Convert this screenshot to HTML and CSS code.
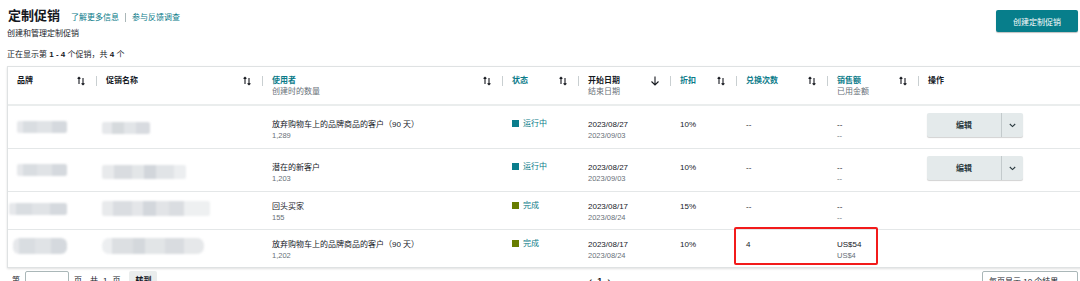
FILE: index.html
```html
<!DOCTYPE html>
<html lang="zh-CN">
<head>
  <meta charset="UTF-8">
  <meta name="viewport" content="width=device-width, initial-scale=1.0">
  <title>定制促销</title>
  <link rel="stylesheet" href="styles.css">
</head>
<body>
  <div class="page">
    <div class="top">
      <div>
        <div class="title-row">
          <h1>定制促销</h1>
          <a class="link">了解更多信息</a>
          <span class="sep"></span>
          <a class="link">参与反馈调查</a>
        </div>
        <p class="subtitle">创建和管理定制促销</p>
      </div>
      <button class="primary-btn">创建定制促销</button>
    </div>

    <p class="count">正在显示第 <b>1 - 4</b> 个促销，共 <b>4</b> 个</p>

    <div class="table-box">
      <table>
        <colgroup>
          <col style="width: 89px">
          <col style="width: 166px">
          <col style="width: 240px">
          <col style="width: 76px">
          <col style="width: 92px">
          <col style="width: 66px">
          <col style="width: 91px">
          <col style="width: 91px">
          <col>
        </colgroup>
        <thead>
          <tr>
            <th><div class="th-inner"><span class="label dark">品牌</span><svg class="sort" width="8" height="10" viewBox="0 0 8 10"><path d="M2 8V1M0.6 2.6L2 1.2l1.4 1.4M6 2v7M4.6 7.4L6 8.8l1.4-1.4" /></svg><span class="divider"></span></div></th>
            <th><div class="th-inner"><span class="label dark">促销名称</span><svg class="sort" width="8" height="10" viewBox="0 0 8 10"><path d="M2 8V1M0.6 2.6L2 1.2l1.4 1.4M6 2v7M4.6 7.4L6 8.8l1.4-1.4" /></svg><span class="divider"></span></div></th>
            <th><div class="th-inner"><span class="label"><span class="teal">使用者</span><span class="sub">创建时的数量</span></span><svg class="sort" width="8" height="10" viewBox="0 0 8 10"><path d="M2 8V1M0.6 2.6L2 1.2l1.4 1.4M6 2v7M4.6 7.4L6 8.8l1.4-1.4" /></svg><span class="divider"></span></div></th>
            <th><div class="th-inner"><span class="label teal">状态</span><svg class="sort" width="8" height="10" viewBox="0 0 8 10"><path d="M2 8V1M0.6 2.6L2 1.2l1.4 1.4M6 2v7M4.6 7.4L6 8.8l1.4-1.4" /></svg><span class="divider"></span></div></th>
            <th><div class="th-inner"><span class="label"><span class="dark">开始日期</span><span class="sub">结束日期</span></span><svg class="sort down" width="10" height="10" viewBox="0 0 10 10"><path d="M5 0.5v8.5M1.5 5.5L5 9l3.5-3.5" /></svg><span class="divider"></span></div></th>
            <th><div class="th-inner"><span class="label teal">折扣</span><svg class="sort" width="8" height="10" viewBox="0 0 8 10"><path d="M2 8V1M0.6 2.6L2 1.2l1.4 1.4M6 2v7M4.6 7.4L6 8.8l1.4-1.4" /></svg><span class="divider"></span></div></th>
            <th><div class="th-inner"><span class="label teal">兑换次数</span><svg class="sort" width="8" height="10" viewBox="0 0 8 10"><path d="M2 8V1M0.6 2.6L2 1.2l1.4 1.4M6 2v7M4.6 7.4L6 8.8l1.4-1.4" /></svg><span class="divider"></span></div></th>
            <th><div class="th-inner"><span class="label"><span class="teal">销售额</span><span class="sub">已用金额</span></span><svg class="sort" width="8" height="10" viewBox="0 0 8 10"><path d="M2 8V1M0.6 2.6L2 1.2l1.4 1.4M6 2v7M4.6 7.4L6 8.8l1.4-1.4" /></svg><span class="divider"></span></div></th>
            <th><div class="th-inner"><span class="label dark">操作</span></div></th>
          </tr>
        </thead>
        <tbody>
          <tr class="tall">
            <td><div class="blur b1"></div></td>
            <td><div class="blur b2"></div></td>
            <td><div>放弃购物车上的品牌商品的客户（90 天）</div><div class="sub">1,289</div></td>
            <td><span class="status"><i class="sq running"></i>运行中</span></td>
            <td><div>2023/08/27</div><div class="sub">2023/09/03</div></td>
            <td>10%</td>
            <td>--</td>
            <td><div>--</div><div class="sub">--</div></td>
            <td class="action"><div class="split-btn"><span class="main">编辑</span><span class="caret"><svg width="7" height="5" viewBox="0 0 7 5"><path d="M0.8 1l2.7 2.6L6.2 1" /></svg></span></div></td>
          </tr>
          <tr class="tall">
            <td><div class="blur b1"></div></td>
            <td><div class="blur b2 w2"></div></td>
            <td><div>潜在的新客户</div><div class="sub">1,203</div></td>
            <td><span class="status"><i class="sq running"></i>运行中</span></td>
            <td><div>2023/08/27</div><div class="sub">2023/09/03</div></td>
            <td>10%</td>
            <td>--</td>
            <td><div>--</div><div class="sub">--</div></td>
            <td class="action"><div class="split-btn"><span class="main">编辑</span><span class="caret"><svg width="7" height="5" viewBox="0 0 7 5"><path d="M0.8 1l2.7 2.6L6.2 1" /></svg></span></div></td>
          </tr>
          <tr>
            <td><div class="blur b1 wide"></div></td>
            <td><div class="blur b2 w3"></div></td>
            <td><div>回头买家</div><div class="sub">155</div></td>
            <td><span class="status"><i class="sq done"></i>完成</span></td>
            <td><div>2023/08/17</div><div class="sub">2023/08/24</div></td>
            <td>15%</td>
            <td>--</td>
            <td><div>--</div><div class="sub">--</div></td>
            <td></td>
          </tr>
          <tr class="last">
            <td><div class="blur b1 tall-blur"></div></td>
            <td><div class="blur b2 w4"></div></td>
            <td><div>放弃购物车上的品牌商品的客户（90 天）</div><div class="sub">1,202</div></td>
            <td><span class="status"><i class="sq done"></i>完成</span></td>
            <td><div>2023/08/17</div><div class="sub">2023/08/24</div></td>
            <td>10%</td>
            <td>4</td>
            <td><div>US$54</div><div class="sub">US$4</div></td>
            <td></td>
          </tr>
        </tbody>
      </table>
    </div>

    <div class="pager">
      <div class="pager-left">
        <span>第</span>
        <span class="page-input"></span>
        <span>页，共</span>
        <span>1</span>
        <span>页</span>
        <span class="go-btn">转到</span>
      </div>
      <div class="pager-mid">&lsaquo;&nbsp;&nbsp;1&nbsp;&nbsp;&rsaquo;</div>
      <div class="per-page">每页显示 10 个结果</div>
    </div>

    <div class="highlight"></div>
  </div>
</body>
</html>
```

FILE: styles.css
```css
body {
  margin: 0;
  font-family: "Liberation Sans", "Noto Sans CJK SC", sans-serif;
  font-size: 8px;
  line-height: 11px;
  color: #16191f;
  background: #fff;
  overflow: hidden;
}
p {
  margin: 0;
}
.page {
  position: relative;
  padding: 8px 0 0 7px;
  width: 1200px;
}
.top {
  display: flex;
  justify-content: space-between;
  align-items: flex-start;
  width: 1071px;
}
.title-row {
  display: flex;
  align-items: baseline;
  gap: 6px;
}
h1 {
  margin: 0 5px 0 1px;
  font-size: 13px;
  line-height: 16px;
  font-weight: bold;
  color: #16191f;
}
.link {
  color: #0a7b89;
  font-size: 8px;
}
.sep {
  display: inline-block;
  width: 1px;
  height: 9px;
  background: #aab7b8;
  align-self: center;
  margin-top: 2px;
}
.subtitle {
  margin-top: 4px;
  color: #16191f;
}
.primary-btn {
  margin-top: 2px;
  width: 82px;
  height: 22px;
  border: none;
  border-radius: 2px;
  background: #077e8b;
  color: #fff;
  font-family: inherit;
  font-size: 8px;
  box-shadow: 0 1px 1px rgba(0, 0, 0, 0.25);
  padding: 0;
}
.count {
  margin-top: 10px;
}
.count b {
  font-weight: bold;
}
.table-box {
  margin-top: 6px;
  width: 1075px;
  border: 1px solid #dfe2e3;
  box-shadow: 0 1px 2px rgba(0, 0, 0, 0.12);
}
table {
  width: 100%;
  table-layout: fixed;
  border-collapse: collapse;
}
th {
  text-align: left;
  vertical-align: top;
  padding: 8px 0 7px 9px;
  border-bottom: 2px solid #eaeded;
  font-weight: bold;
}
.th-inner {
  display: flex;
  align-items: flex-start;
}
.label {
  flex: 1;
  display: flex;
  flex-direction: column;
  font-weight: bold;
}
.dark {
  color: #16191f;
}
.teal {
  color: #0a7b89;
}
th .sub {
  font-weight: normal;
  color: #687078;
}
.sort {
  margin-top: 1px;
  flex: none;
}
.sort path {
  fill: none;
  stroke: #16191f;
  stroke-width: 1.1;
}
.sort.down {
  margin-right: -1px;
}
.divider {
  flex: none;
  width: 1px;
  height: 10px;
  margin: 1px 0 0 11px;
  background: #c9cfd1;
}
td {
  vertical-align: top;
  padding: 9px 0 6px 9px;
  border-bottom: 1px solid #e4e7e8;
  white-space: nowrap;
}
tr.tall td {
  padding-top: 13px;
  padding-bottom: 7px;
}
tr.tall td.action {
  padding-top: 7px;
  padding-left: 8px;
}
tr.last td {
  border-bottom: none;
}
td .sub {
  font-size: 7.5px;
  color: #687078;
}
.status {
  display: inline-flex;
  align-items: center;
  gap: 4px;
  color: #0a7b89;
  margin-top: -1px;
}
.sq {
  display: inline-block;
  width: 7px;
  height: 7px;
}
.sq.running {
  background: #0a7d8c;
}
.sq.done {
  background: #687d00;
}
.split-btn {
  display: flex;
  width: 96px;
  height: 24px;
  background: #e4eaeb;
  border-radius: 2px;
  box-shadow: 0 1px 1px rgba(0, 0, 0, 0.18);
}
.split-btn .main {
  flex: 1;
  display: flex;
  align-items: center;
  justify-content: center;
  border-right: 1px solid #c3cacc;
  font-weight: bold;
  color: #2b3a3f;
}
.split-btn .caret {
  width: 21px;
  display: flex;
  align-items: center;
  justify-content: center;
}
.caret path {
  fill: none;
  stroke: #2b3a3f;
  stroke-width: 1.1;
}
.blur {
  height: 12px;
  filter: blur(1.2px);
  border-radius: 2px;
}
.b1 {
  width: 50px;
  margin: 2px 0 0 0;
  background: linear-gradient(90deg, #e6e8eb 0 12%, #d9dde1 12% 40%, #e0e3e6 40% 70%, #d5d9de 70% 100%);
}
.b1.wide {
  width: 58px;
  margin-left: -8px;
}
.b1.tall-blur {
  width: 54px;
  height: 16px;
  margin: -1px 0 0 -4px;
  border-radius: 6px;
}
.b2 {
  width: 48px;
  margin: 3px 0 0 -4px;
  background: linear-gradient(90deg, #e6e8eb 0 20%, #d6dadd 20% 45%, #e2e5e8 45% 70%, #d8dbe0 70% 100%);
}
.b2.w2 {
  width: 84px;
  height: 14px;
  background: linear-gradient(90deg, #e8eaec 0 14%, #d9dce0 14% 36%, #e3e6e8 36% 50%, #d2d6db 50% 64%, #e1e4e7 64% 86%, #eceef0 86% 100%);
}
.b2.w3 {
  width: 108px;
  height: 15px;
  margin-top: 0;
  background: linear-gradient(90deg, #e8eaec 0 10%, #dadde1 10% 28%, #e4e6e9 28% 38%, #d3d7dc 38% 50%, #e2e4e7 50% 62%, #dadde1 62% 76%, #eef0f1 76% 100%);
}
.b2.w4 {
  width: 102px;
  height: 16px;
  margin-top: -1px;
  border-radius: 7px;
  background: linear-gradient(90deg, #eceef0 0 10%, #dcdfe2 10% 30%, #d4d8dc 30% 42%, #e2e5e7 42% 62%, #d9dce0 62% 80%, #e6e8ea 80% 100%);
}
.pager {
  display: flex;
  justify-content: space-between;
  align-items: flex-start;
  width: 1071px;
  margin-top: 3px;
}
.pager-left {
  display: flex;
  align-items: flex-start;
  gap: 5px;
  padding-left: 5px;
}
.pager-left span {
  line-height: 20px;
}
.page-input {
  width: 42px;
  height: 20px;
  border: 1px solid #aab7b8;
  border-radius: 2px;
}
.pager-left .go-btn {
  margin-left: 4px;
  width: 28px;
  text-align: center;
  background: #eaeded;
  border-radius: 2px;
  font-weight: bold;
}
.pager-mid {
  font-size: 9px;
  line-height: 20px;
  margin-left: 60px;
  font-weight: bold;
}
.per-page {
  width: 96px;
  height: 20px;
  border: 1px solid #aab7b8;
  border-radius: 2px;
  padding-left: 6px;
  line-height: 20px;
  box-sizing: border-box;
}
.highlight {
  position: absolute;
  left: 734px;
  top: 227px;
  width: 140px;
  height: 34px;
  border: 2px solid #f21b1b;
  border-radius: 2px;
}
```
